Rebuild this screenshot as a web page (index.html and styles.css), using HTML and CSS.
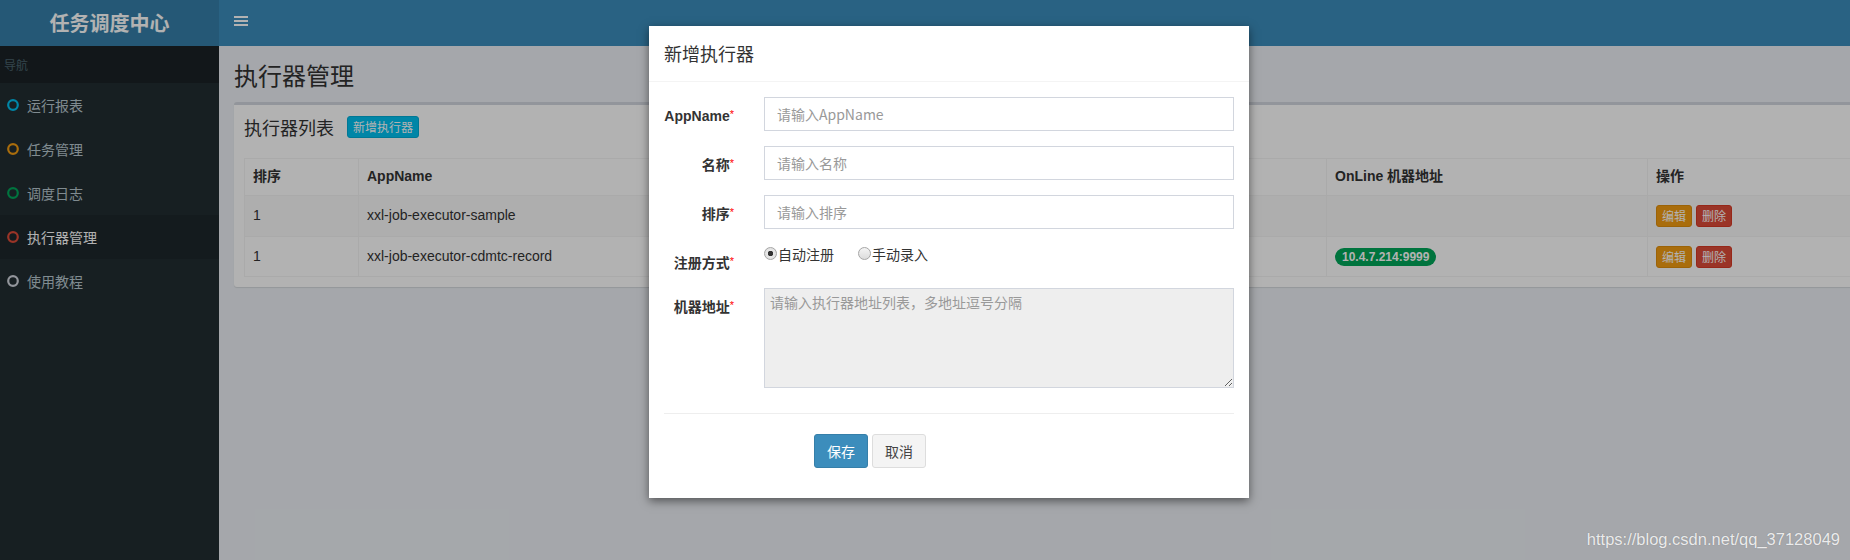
FILE: index.html
```
<!DOCTYPE html>
<html lang="zh-CN">
<head>
<meta charset="utf-8">
<title>任务调度中心</title>
<link rel="stylesheet" href="styles.css">
</head>
<body>
<div class="app">
  <header class="main-header">
    <div class="logo">任务调度中心</div>
    <nav class="navbar">
      <span class="toggle">
        <svg width="14" height="12" viewBox="0 0 14 12"><rect x="0" y="1" width="14" height="2" fill="#fff"/><rect x="0" y="5" width="14" height="2" fill="#fff"/><rect x="0" y="9" width="14" height="2" fill="#fff"/></svg>
      </span>
    </nav>
  </header>
  <div class="body-row">
    <aside class="sidebar">
      <div class="nav-header">导航</div>
      <ul class="menu">
        <li><svg class="ic" viewBox="0 0 12 12"><circle cx="6" cy="6" r="4.8" fill="none" stroke="#00c0ef" stroke-width="2.2"/></svg><span>运行报表</span></li>
        <li><svg class="ic" viewBox="0 0 12 12"><circle cx="6" cy="6" r="4.8" fill="none" stroke="#f39c12" stroke-width="2.2"/></svg><span>任务管理</span></li>
        <li><svg class="ic" viewBox="0 0 12 12"><circle cx="6" cy="6" r="4.8" fill="none" stroke="#00a65a" stroke-width="2.2"/></svg><span>调度日志</span></li>
        <li class="active"><svg class="ic" viewBox="0 0 12 12"><circle cx="6" cy="6" r="4.8" fill="none" stroke="#dd4b39" stroke-width="2.2"/></svg><span>执行器管理</span></li>
        <li><svg class="ic" viewBox="0 0 12 12"><circle cx="6" cy="6" r="4.8" fill="none" stroke="#d2d6de" stroke-width="2.2"/></svg><span>使用教程</span></li>
      </ul>
    </aside>
    <main class="content">
      <h1 class="page-title">执行器管理</h1>
      <section class="box">
        <div class="box-header">
          <h3 class="box-title">执行器列表</h3>
          <button class="btn btn-info btn-xs">新增执行器</button>
        </div>
        <div class="box-body">
          <table class="table">
            <colgroup>
              <col class="c1"><col class="c2"><col class="c3"><col class="c4"><col class="c5"><col class="c6">
            </colgroup>
            <thead>
              <tr><th>排序</th><th>AppName</th><th></th><th></th><th>OnLine 机器地址</th><th>操作</th></tr>
            </thead>
            <tbody>
              <tr class="odd"><td>1</td><td>xxl-job-executor-sample</td><td></td><td></td><td></td><td><button class="btn btn-warning btn-xs">编辑</button> <button class="btn btn-danger btn-xs">删除</button></td></tr>
              <tr><td>1</td><td>xxl-job-executor-cdmtc-record</td><td></td><td></td><td><span class="badge">10.4.7.214:9999</span></td><td><button class="btn btn-warning btn-xs">编辑</button> <button class="btn btn-danger btn-xs">删除</button></td></tr>
            </tbody>
          </table>
        </div>
      </section>
    </main>
  </div>
</div>

<div class="backdrop"></div>

<div class="modal">
  <div class="modal-header"><h4 class="modal-title">新增执行器</h4></div>
  <div class="modal-body">
    <div class="form-row">
      <label class="control-label">AppName<span class="req">*</span></label>
      <div class="field"><input class="form-control" type="text" placeholder="请输入AppName"></div>
    </div>
    <div class="form-row">
      <label class="control-label">名称<span class="req">*</span></label>
      <div class="field"><input class="form-control" type="text" placeholder="请输入名称"></div>
    </div>
    <div class="form-row">
      <label class="control-label">排序<span class="req">*</span></label>
      <div class="field"><input class="form-control" type="text" placeholder="请输入排序"></div>
    </div>
    <div class="form-row">
      <label class="control-label">注册方式<span class="req">*</span></label>
      <div class="field radios">
        <label class="radio"><input type="radio" name="addressType" checked>自动注册</label>
        <label class="radio"><input type="radio" name="addressType">手动录入</label>
      </div>
    </div>
    <div class="form-row">
      <label class="control-label">机器地址<span class="req">*</span></label>
      <div class="field"><textarea class="form-control area" readonly placeholder="请输入执行器地址列表，多地址逗号分隔"></textarea></div>
    </div>
    <hr class="divider">
    <div class="actions">
      <button class="btn btn-primary">保存</button>
      <button class="btn btn-default">取消</button>
    </div>
  </div>
</div>

<div class="watermark">https://blog.csdn.net/qq_37128049</div>
</body>
</html>
```

FILE: styles.css
```
* { box-sizing: border-box; }
html, body {
  margin: 0;
  padding: 0;
}
body {
  width: 1850px;
  height: 560px;
  overflow: hidden;
  position: relative;
  font-family: "Liberation Sans", "Noto Sans CJK SC", Arial, sans-serif;
  font-size: 14px;
  line-height: 1.42857;
  color: #333;
  background: #ecf0f5;
}
.app {
  display: flex;
  flex-direction: column;
  width: 1850px;
  height: 560px;
}
.main-header {
  display: flex;
  height: 46px;
  flex: none;
}
.logo {
  width: 219px;
  background: #367fa9;
  color: #fff;
  font-size: 20px;
  font-weight: bold;
  line-height: 46px;
  text-align: center;
  font-family: "Noto Sans CJK SC", sans-serif;
}
.navbar {
  flex: 1;
  background: #3c8dbc;
  display: flex;
  align-items: center;
}
.toggle {
  display: flex;
  padding: 0 15px;
  margin-top: -4px;
}
.body-row {
  display: flex;
  flex: 1;
  min-height: 0;
}
.sidebar {
  width: 219px;
  flex: none;
  background: #222d32;
}
.nav-header {
  height: 37px;
  background: #1a2226;
  color: #4b646f;
  font-size: 12px;
  line-height: 37px;
  padding-left: 4px;
  font-family: "Noto Sans CJK SC", sans-serif;
}
.menu {
  list-style: none;
  margin: 0;
  padding: 0;
}
.menu li {
  height: 44px;
  display: flex;
  align-items: center;
  padding-left: 7px;
  color: #b8c7ce;
  font-size: 14px;
  font-family: "Noto Sans CJK SC", sans-serif;
}
.menu li .ic {
  width: 12px;
  height: 12px;
  margin-right: 8px;
}
.menu li.active {
  background: #1e282c;
  color: #fff;
}
.content {
  flex: 1;
  min-width: 0;
  overflow: hidden;
  padding: 15px 0 0 15px;
}
.page-title {
  margin: 0;
  font-size: 24px;
  font-weight: normal;
  line-height: 28px;
  font-family: "Noto Sans CJK SC", sans-serif;
  color: #333;
}
.box {
  margin-top: 13px;
  width: 1680px;
  background: #fff;
  border-top: 3px solid #d2d6de;
  border-radius: 3px;
  box-shadow: 0 1px 1px rgba(0,0,0,0.1);
}
.box-header {
  display: flex;
  align-items: center;
  padding: 10px 10px 10px 10px;
  height: 43px;
}
.box-title {
  margin: 0 13px 0 0;
  font-size: 18px;
  font-weight: normal;
  line-height: 1;
  font-family: "Noto Sans CJK SC", sans-serif;
}
.box-body {
  padding: 10px;
}
.table {
  width: 1660px;
  table-layout: fixed;
  border-collapse: collapse;
}
.c1 { width: 114px; }
.c2 { width: 300px; }
.c3 { width: 300px; }
.c4 { width: 368px; }
.c5 { width: 321px; }
.c6 { width: 257px; }
.table th, .table td {
  border: 1px solid #f4f4f4;
  padding: 8px;
  text-align: left;
  vertical-align: middle;
  white-space: nowrap;
  overflow: hidden;
}
.table th {
  font-weight: bold;
  height: 37px;
}
.table td { height: 40px; }
.table tr.odd td { background: #f9f9f9; height: 41px; }
.btn {
  display: inline-block;
  border: 1px solid transparent;
  border-radius: 3px;
  font-family: "Noto Sans CJK SC", sans-serif;
  cursor: pointer;
  vertical-align: middle;
  padding: 6px 12px;
  font-size: 14px;
  line-height: 20px;
}
.btn-xs {
  padding: 1px 5px;
  font-size: 12px;
  line-height: 18px;
}
.btn-info { background: #00c0ef; border-color: #00acd6; color: #fff; }
.btn-warning { background: #f39c12; border-color: #e08e0b; color: #fff; }
.btn-danger { background: #dd4b39; border-color: #d73925; color: #fff; }
.btn-primary { background: #3c8dbc; border-color: #367fa9; color: #fff; }
.btn-default { background: #f4f4f4; border-color: #ddd; color: #444; }
.badge {
  display: inline-block;
  background: #00a65a;
  color: #fff;
  font-size: 12px;
  font-weight: bold;
  line-height: 12px;
  padding: 3px 7px;
  border-radius: 10px;
}
.backdrop {
  position: absolute;
  left: 0;
  top: 0;
  width: 1850px;
  height: 560px;
  background: rgba(0,0,0,0.3);
}
.modal {
  position: absolute;
  left: 649px;
  top: 26px;
  width: 600px;
  background: #fff;
  box-shadow: 0 3px 9px rgba(0,0,0,0.5);
}
.modal-header {
  padding: 15px;
  border-bottom: 1px solid #f4f4f4;
  height: 56px;
}
.modal-title {
  margin: 0;
  font-size: 18px;
  font-weight: normal;
  line-height: 25px;
  font-family: "Noto Sans CJK SC", sans-serif;
  color: #333;
}
.modal-body {
  padding: 15px 0;
}
.form-row {
  display: flex;
  margin-bottom: 15px;
}
.control-label {
  width: 100px;
  flex: none;
  padding: 7px 15px 0 0;
  text-align: right;
  font-weight: bold;
  line-height: 20px;
  color: #333;
  font-family: "Liberation Sans", "Noto Sans CJK SC", sans-serif;
}
.req {
  color: #f00;
  font-weight: normal;
  font-size: 11px;
  vertical-align: 3px;
}
.field {
  flex: 1;
  padding: 0 15px;
}
.form-control {
  display: block;
  width: 100%;
  height: 34px;
  padding: 6px 12px;
  font-size: 14px;
  line-height: 20px;
  color: #555;
  background: #fff;
  border: 1px solid #d2d6de;
  border-radius: 0;
  font-family: "Noto Sans CJK SC", sans-serif;
  outline: none;
}
.form-control::placeholder { color: #999; }
.area {
  height: 100px;
  padding: 3px 5px;
  background: #eee;
  resize: vertical;
}
.radios {
  display: flex;
  align-items: flex-start;
  height: 27px;
  line-height: 20px;
}
.radio {
  display: flex;
  align-items: center;
  height: 20px;
  margin-right: 24px;
  font-family: "Noto Sans CJK SC", sans-serif;
  color: #333;
}
.radio input {
  -webkit-appearance: none;
  appearance: none;
  width: 13px;
  height: 13px;
  margin: 0 1px 0 0;
  border: 1px solid #a6a6a6;
  border-radius: 50%;
  background: linear-gradient(#f4f4f4, #dcdcdc);
  position: relative;
  top: -1px;
}
.radio input:checked {
  background: radial-gradient(circle, #333 0, #333 2.5px, #e8e8e8 3px, #dcdcdc 100%);
}
.divider {
  margin: 25px 15px 20px;
  border: 0;
  border-top: 1px solid #eee;
}
.actions {
  display: flex;
  gap: 4px;
  padding-left: 165px;
  margin-bottom: 15px;
}
.actions .btn {
  height: 34px;
}
.watermark {
  position: absolute;
  right: 10px;
  bottom: 8px;
  font-family: "Liberation Sans", Arial, sans-serif;
  font-size: 16.5px;
  color: rgba(255,255,255,0.85);
  text-shadow: 0 0 1px rgba(0,0,0,0.25);
}
```
